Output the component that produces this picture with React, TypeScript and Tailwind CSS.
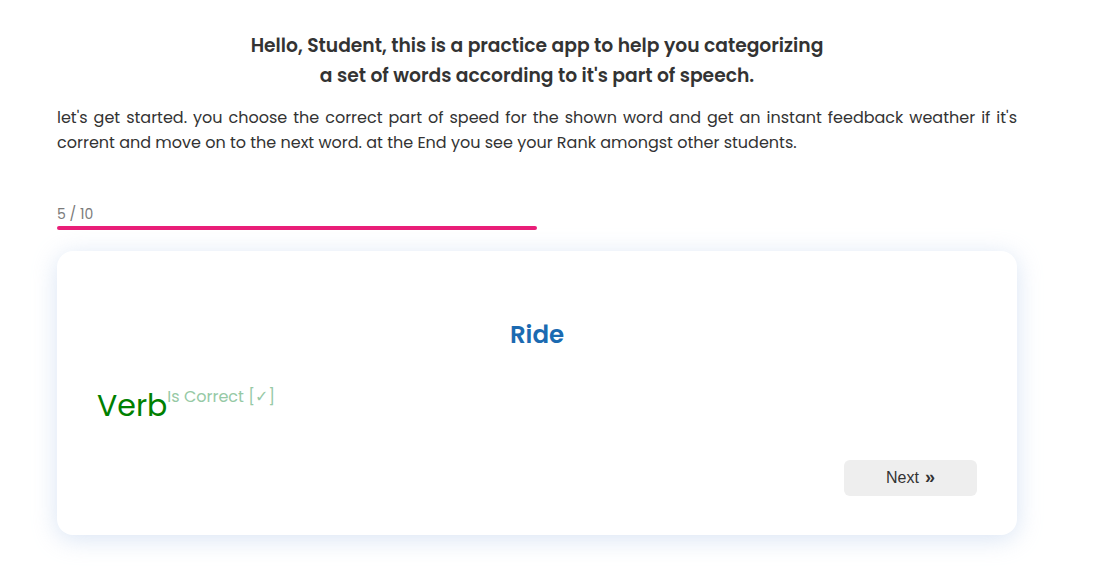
import React from "react";

export default function App() {
  const font = { fontFamily: "Poppins, 'DejaVu Sans', sans-serif" };
  return (
    <div className="min-h-[587px] w-[1101px] bg-white text-[#333333]" style={font}>
      <div className="w-[960px] ml-[57px] pt-[31px]">
        <h1 className="text-center text-[18.72px] leading-[30px] font-semibold text-[#333]">
          Hello, Student, this is a practice app to help you categorizing
          <br />a set of words according to it's part of speech.
        </h1>
        <p className="mt-[14px] text-[16px] leading-[25px] text-justify text-[#333]">
          let's get started. you choose the correct part of speed for the shown word and get an instant feedback weather if it's corrent and move on to the next word. at the End you see your Rank amongst other students.
        </p>
        <div className="mt-[51px] text-[14px] leading-[17px] text-[#7a7a7a]">5 / 10</div>
        <div className="mt-[3px] h-[4px] w-full">
          <div className="h-[4px] w-1/2 rounded-full bg-[#e91e78]" />
        </div>
        <div className="mt-[21px] h-[284px] rounded-[16px] bg-white shadow-[0_4px_24px_rgba(170,195,230,0.45)] px-[40px] pt-[68px]">
          <div className="text-center text-[24.5px] leading-[32px] font-semibold text-[#1b6ab1]">Ride</div>
          <div className="mt-[35px] flex items-start">
            <span className="text-[30px] leading-[40px] text-[#008000]">Verb</span>
            <span className="text-[16px] leading-[20px] text-[#96c9a5] mt-[1px]">Is Correct [✓]</span>
          </div>
          <div className="mt-[34px] flex justify-end pr-0">
            <button
              className="w-[133px] h-[36px] rounded-[6px] bg-[#eeeeee] text-[16px] text-[#333] flex items-center justify-center gap-[6px]"
              style={{ fontFamily: "'Liberation Sans', Arial, sans-serif" }}
            >
              Next
              <span className="text-[18px] font-bold leading-none -mt-[2px]">»</span>
            </button>
          </div>
        </div>
      </div>
    </div>
  );
}
